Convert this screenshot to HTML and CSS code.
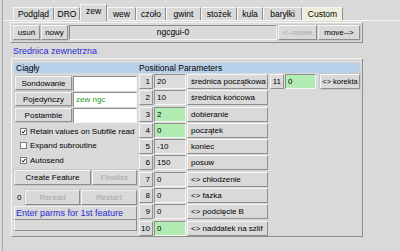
FILE: index.html
```html
<!doctype html>
<html>
<head>
    <meta charset="utf-8">
    <title>ngcgui</title>
    <link rel="stylesheet" href="styles.css">
</head>
<body>
    <div class="nb">
        <div class="tabs">
            <span class="tab">Podgląd</span>
            <span class="tab">DRO</span>
            <span class="tab active">zew</span>
            <span class="tab">wew</span>
            <span class="tab">czoło</span>
            <span class="tab">gwint</span>
            <span class="tab">stożek</span>
            <span class="tab">kula</span>
            <span class="tab">baryłki</span>
            <span class="tab custom">Custom</span>
        </div>

        <div class="page">
            <div class="toolbar">
                <button class="btn w27">usuń</button>
                <button class="btn w27">nowy</button>
                <div class="name">ngcgui-0</div>
                <button class="btn w39" disabled>&lt;--move</button>
                <button class="btn w42">move--&gt;</button>
            </div>

            <div class="title">Srednica zewnetrzna</div>

            <div class="panels">
                <div class="left">
                    <div class="head">Ciągły</div>
                    <div class="file-row">
                        <button class="btn fbtn">Sondowanie</button>
                        <div class="fentry"></div>
                    </div>
                    <div class="file-row">
                        <button class="btn fbtn">Pojedyńczy</button>
                        <div class="fentry green-text">zew ngc</div>
                    </div>
                    <div class="file-row">
                        <button class="btn fbtn">Postamble</button>
                        <div class="fentry"></div>
                    </div>

                    <label class="check"><span class="box"><svg width="7" height="7" viewBox="0 0 7 7"><path d="M1 3.5 L3 5.5 L6.2 1.2" fill="none" stroke="#000" stroke-width="1.4"/></svg></span>Retain values on Subfile read</label>
                    <label class="check"><span class="box"></span>Expand subroutine</label>
                    <label class="check"><span class="box"><svg width="7" height="7" viewBox="0 0 7 7"><path d="M1 3.5 L3 5.5 L6.2 1.2" fill="none" stroke="#000" stroke-width="1.4"/></svg></span>Autosend</label>

                    <div class="action-row">
                        <button class="btn create">Create Feature</button>
                        <button class="btn grow" disabled>Finalize</button>
                    </div>
                    <div class="action-row">
                        <span class="count">0</span>
                        <button class="btn reread" disabled>Reread</button>
                        <button class="btn grow" disabled>Restart</button>
                    </div>
                    <div class="status">Enter parms for 1st feature</div>
                    <div class="spare"></div>
                </div>

                <div class="right">
                    <div class="head">Positional Parameters</div>
                    <div class="params">
                        <span class="num">1</span><span class="entry">20</span><span class="plabel">średnica początkowa</span>
                        <span class="extra"><span class="num n11">11</span><span class="entry green e30">0</span><button class="btn korekta">&lt;&gt; korekta</button></span>

                        <span class="num">2</span><span class="entry">10</span><span class="plabel">średnica końcowa</span><span></span>
                        <span class="num">3</span><span class="entry green">2</span><span class="plabel">dobieranie</span><span></span>
                        <span class="num">4</span><span class="entry green">0</span><span class="plabel">początek</span><span></span>
                        <span class="num">5</span><span class="entry">-10</span><span class="plabel">koniec</span><span></span>
                        <span class="num">6</span><span class="entry">150</span><span class="plabel">posuw</span><span></span>
                        <span class="num">7</span><span class="entry">0</span><span class="plabel">&lt;&gt; chłodzenie</span><span></span>
                        <span class="num">8</span><span class="entry">0</span><span class="plabel">&lt;&gt; fazka</span><span></span>
                        <span class="num">9</span><span class="entry">0</span><span class="plabel">&lt;&gt; podcięcie B</span><span></span>
                        <span class="num">10</span><span class="entry green">0</span><span class="plabel">&lt;&gt; naddatek na szlif</span><span></span>
                    </div>
                </div>
            </div>
        </div>
    </div>
</body>
</html>
```

FILE: styles.css
```css
/* Reset */
* { padding:0; margin:0; box-sizing:border-box; }

/* Tk look */
:root {
    --bg: #d9d9d9;
    --light: #f6f6f6;
    --dark: #8e8e8e;
    --head: #b9d0ea;
    --green: #b3ecb3;
    --blue: #2a2ad2;
}

body {
    width: 400px;
    height: 251px;
    overflow: hidden;
    background-color: var(--bg);
    font-family: "Liberation Sans", Arial, sans-serif;
    font-size: 8px;
    color: #000;
    white-space: nowrap;
}

.nb {
    margin-left: 2px;
    height: 251px;
    border-left: 1px solid #a9a9a9;
}

/* Tabs */
.tabs {
    display: flex;
    align-items: flex-end;
    height: 21px;
    padding-left: 10px;
    border-bottom: 1px solid var(--light);
}
.tab {
    height: 13px;
    line-height: 12px;
    font-size: 8.5px;
    text-align: center;
    border: 1px solid;
    border-bottom: none;
    border-color: var(--light) var(--dark) transparent var(--light);
}
.tab:nth-child(1) { width: 41px; }
.tab:nth-child(2) { width: 26px; }
.tab:nth-child(3) { width: 27px; }
.tab:nth-child(4) { width: 29px; }
.tab:nth-child(5) { width: 30px; }
.tab:nth-child(6) { width: 35px; }
.tab:nth-child(7) { width: 36px; }
.tab:nth-child(8) { width: 26px; }
.tab:nth-child(9) { width: 39px; }
.tab:nth-child(10) { width: 41px; }
.tab.active {
    height: 17px;
    line-height: 13px;
    margin-bottom: -1px;
    background-color: var(--bg);
}
.tab.custom { background-color: #eeeedd; }

/* Page */
.page { padding: 1px 0 0 7px; }

.btn {
    display: block;
    height: 15px;
    font-family: inherit;
    font-size: 8px;
    color: #000;
    white-space: nowrap;
    background-color: var(--bg);
    border: 1px solid;
    border-color: var(--light) var(--dark) var(--dark) var(--light);
    box-shadow: 0 0 0 0.5px #b8b8b8;
}
.btn:disabled { color: #a6a6a6; }

.toolbar {
    display: flex;
    gap: 1px;
    width: 353px;
    height: 21px;
    padding: 2px;
    border: 1px solid;
    border-color: var(--light) var(--dark) var(--dark) var(--light);
}
.w27 { width: 27px; }
.w39 { width: 39px; }
.w42 { width: 42px; }
.name {
    flex: 1;
    height: 15px;
    line-height: 13px;
    text-align: center;
    font-size: 8.5px;
    border: 1px solid;
    border-color: var(--dark) var(--light) var(--light) var(--dark);
}

.title {
    margin: 3px 0 0 3px;
    height: 12px;
    font-size: 9px;
    color: var(--blue);
}

/* Panels */
.panels {
    display: flex;
    width: 352px;
    height: 179px;
    margin-left: 1px;
    padding: 4px 2px 0 2px;
    border: 1px solid;
    border-color: var(--light) var(--dark) var(--dark) var(--light);
}
.head {
    height: 10px;
    line-height: 10px;
    padding-left: 2px;
    font-size: 8.5px;
    background-color: var(--head);
}

.left {
    width: 125px;
    display: flex;
    flex-direction: column;
}
.file-row {
    display: flex;
    height: 14px;
    margin-top: 2px;
    padding-left: 1px;
}
.left .head + .file-row { margin-top: 3px; }
.fbtn { width: 57px; height: 14px; }
.fentry {
    width: 64px;
    margin-left: 1px;
    height: 15px;
    padding-left: 2px;
    line-height: 13px;
    background-color: #fff;
    border: 1px solid;
    border-color: var(--dark) var(--light) var(--light) var(--dark);
}
.green-text { color: #1f9a1f; }

.check {
    display: flex;
    align-items: center;
    height: 14.5px;
    padding-left: 6px;
}
.left .file-row + .check { margin-top: 2px; }
.box {
    display: flex;
    align-items: center;
    justify-content: center;
    width: 7px;
    height: 7px;
    margin-right: 3px;
    background-color: #fff;
    border: 1px solid #7a7a7a;
}
.box svg { display: block; }

.action-row {
    display: flex;
    align-items: center;
    gap: 1px;
    height: 15px;
    margin-top: 2px;
}
.action-row + .action-row { margin-top: 5px; }
.create { width: 77px; }
.grow { flex: 1; }
.count { width: 10px; padding-left: 3px; }
.reread { width: 55px; }

.status {
    height: 14px;
    margin-top: 1px;
    line-height: 12px;
    padding-left: 1px;
    font-size: 9px;
    color: var(--blue);
    border: 1px solid;
    border-color: var(--light) var(--dark) var(--dark) var(--light);
}
.spare {
    height: 11px;
    border: 1px solid;
    border-top: none;
    border-color: var(--light) var(--dark) var(--dark) var(--light);
}

.right { flex: 1; }
.params {
    display: grid;
    grid-template-columns: 14px 32px 81px auto;
    grid-auto-rows: 15px;
    row-gap: 1.3px;
    column-gap: 1px;
    margin-top: 1px;
    padding-left: 2px;
}
.num {
    text-align: right;
    padding-right: 2px;
    line-height: 13px;
    border: 1px solid;
    border-color: var(--light) var(--dark) var(--dark) var(--light);
}
.entry {
    padding-left: 2px;
    line-height: 13px;
    background-color: #dcdcdc;
    border: 1px solid;
    border-color: var(--dark) var(--light) var(--light) var(--dark);
}
.entry.green { background-color: var(--green); }
.plabel {
    padding-left: 3px;
    line-height: 13px;
    border: 1px solid;
    border-color: var(--light) var(--dark) var(--dark) var(--light);
}
.extra {
    display: flex;
    gap: 1px;
    padding-left: 1px;
}
.n11 { width: 14px; }
.e30 { width: 31px; }
.korekta { width: 40px; margin-left: 3px; padding: 0; font-size: 7.5px; }
```
